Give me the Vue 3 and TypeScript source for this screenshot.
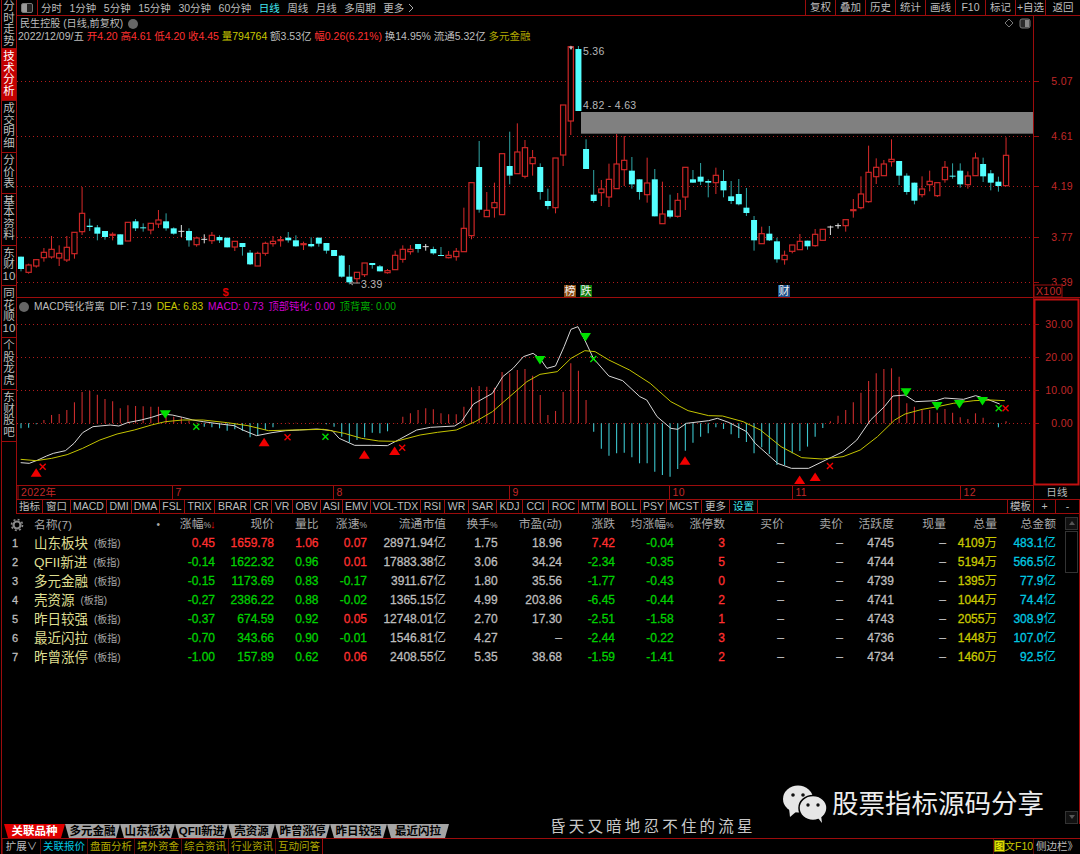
<template>
  <div class="app">
    <div class="upper">
      <nav class="side">
        <div v-for="s in sideItems" :key="s" class="side-item" :class="{ active: s === '技术分析' }">{{ s }}</div>
      </nav>

      <main class="main">
        <header class="toolbar">
          <div class="panel-btn"><span class="panel-ico"></span></div>
          <div class="periods">
            <span v-for="p in periods" :key="p" :class="{ on: p === '日线' }">{{ p }}</span>
            <svg class="more-arrow" width="6" height="10" viewBox="0 0 6 10"><path d="M1 1l4 4-4 4" fill="none" stroke="#aaa" /></svg>
          </div>
          <div class="tools">
            <span v-for="t in tools" :key="t" class="tool">{{ t }}</span>
          </div>
        </header>

        <section class="chart">
          <svg class="plot" width="1063" height="282" viewBox="17 16 1063 282">
            <line v-for="g in priceGrid" :key="g.y" class="grid" x1="17" x2="1033" :y1="g.y" :y2="g.y" />
            <g v-for="c in candles" :key="c.x">
              <line :class="'wick-' + c.kind" :x1="c.x" :x2="c.x" :y1="c.hi" :y2="c.lo" />
              <rect v-if="c.kind === 'r'" class="body-r" :x="c.x - 2.6" :y="c.top" width="5.2" :height="c.h" />
              <rect v-else-if="c.kind === 'c'" class="body-c" :x="c.x - 3" :y="c.top" width="6" :height="c.h" />
              <line v-else class="wick-w" :x1="c.x - 3" :x2="c.x + 3" :y1="c.top" :y2="c.top" />
            </g>
            <rect x="581" y="112" width="452" height="21" fill="#808080" />
            <line x1="581" x2="1033" y1="133.5" y2="133.5" stroke="#555" />
            <path d="M569 47l2-1 2 1-2 3z" fill="#bbb" />
            <text class="lbl" x="583" y="55">5.36</text>
            <text class="lbl" x="583" y="109">4.82 - 4.63</text>
            <text class="lbl" x="361" y="288">3.39</text>
            <path d="M360 283h-10m3-2l-3 2 3 2" fill="none" stroke="#999" />
            <text class="dollar" x="225.500" y="296" text-anchor="middle">$</text>
            <g v-for="b in badges" :key="b.t">
              <rect :x="b.x" y="285" width="12" height="12" :fill="b.c" />
              <text class="badge" :x="b.x + 6" y="295" text-anchor="middle">{{ b.t }}</text>
            </g>
            <line class="solid" x1="1033.500" x2="1033.500" y1="16" y2="298" />
            <line class="solid" x1="17" x2="1080" y1="297.500" y2="297.500" />
            <g v-for="g in priceGrid" :key="'t' + g.y">
              <line class="solid" x1="1034" x2="1039" :y1="g.y" :y2="g.y" />
              <text class="axis" x="1073" :y="g.y + 3.5" text-anchor="end">{{ g.t }}</text>
            </g>
            <rect class="box" x="1034" y="285" width="28" height="12" />
            <text class="axis" x="1036" y="295">X100</text>
            <path d="M1009 19l4 4-4 4-4-4z" fill="none" stroke="#777" />
            <rect x="1020" y="19" width="10" height="9" rx="2" fill="#2a2a2a" stroke="#777" />
            <rect x="1025" y="20" width="4" height="7" fill="#888" />
          </svg>
          <div class="chart-head">
            <div class="stock">民生控股 (日线,前复权) <i class="drop"></i></div>
            <div class="quote">
              <span>2022/12/09/五</span>
              <span class="red">开4.20</span>
              <span class="red">高4.61</span>
              <span class="red">低4.20</span>
              <span class="red">收4.45</span>
              <span class="yellow">量794764</span>
              <span>额3.53亿</span>
              <span class="red">幅0.26(6.21%)</span>
              <span>换14.95%</span>
              <span>流通5.32亿</span>
              <span class="olive">多元金融</span>
            </div>
          </div>
        </section>

        <section class="chart">
          <svg class="plot" width="1063" height="201" viewBox="17 298 1063 201">
            <line v-for="g in macdGrid" :key="g.y" class="grid" x1="17" x2="1033" :y1="g.y" :y2="g.y" />
            <line v-for="b in bars" :key="b.x" :class="b.up ? 'bar-r' : 'bar-c'" :x1="b.x" :x2="b.x" y1="423.300" :y2="b.y" />
            <polyline class="dif" :points="difLine" />
            <polyline class="dea" :points="deaLine" />
            <path v-for="m in upMarks" :key="m[0]" :d="`M${m[0]} ${m[1] - 4.500}l5.500 8.500h-11z`" fill="#f00000" />
            <path v-for="m in downMarks" :key="m[0]" :d="`M${m[0]} ${m[1] + 4.500}l5.500 -8.500h-11z`" fill="#00e000" />
            <path v-for="m in redCross" :key="m[0]" class="x-r" :d="`M${m[0] - 3} ${m[1] - 3}l6 6m0 -6l-6 6`" />
            <path v-for="m in greenCross" :key="m[0]" class="x-g" :d="`M${m[0] - 3} ${m[1] - 3}l6 6m0 -6l-6 6`" />

            <rect class="frame" x="1034.500" y="299.500" width="44" height="185" />
            <g v-for="g in macdGrid" :key="'t' + g.y">
              <line class="solid" x1="1034" x2="1039" :y1="g.y" :y2="g.y" />
              <text class="axis" x="1073" :y="g.y + 3.5" text-anchor="end">{{ g.t }}</text>
            </g>
            <line class="solid" x1="17" x2="1034" y1="485.500" y2="485.500" />
            <line class="solid" x1="1033.500" x2="1033.500" y1="298" y2="499" />
            <g v-for="d in months" :key="d.t">
              <line class="solid" :x1="d.x" :x2="d.x" y1="485" y2="499" />
              <text class="axis" :x="d.x + 3" y="496">{{ d.t }}</text>
            </g>
            <text class="lbl" x="1057" y="496" text-anchor="middle">日线</text>
          </svg>
          <div class="macd-head">
            <i class="drop"></i>
            <span>MACD钝化背离</span>
            <span>DIF: 7.19</span>
            <span class="yellow">DEA: 6.83</span>
            <span class="magenta">MACD: 0.73</span>
            <span class="magenta">顶部钝化: 0.00</span>
            <span class="green">顶背离: 0.00</span>
          </div>
        </section>

        <div class="indicators">
          <span
            v-for="t in indicators"
            :key="t.n"
            class="ind"
            :class="{ cyan: t.n === '设置' }"
            :style="{ width: t.w + 'px' }"
          >{{ t.n }}</span>
          <span class="ind-fill"></span>
          <span v-for="t in indicatorsRight" :key="t.n" class="ind" :style="{ width: t.w + 'px' }">{{ t.n }}</span>
        </div>
      </main>
    </div>

    <section class="table-area">
      <div class="list">
        <div class="row head">
          <span class="idx">
            <svg width="14" height="14" viewBox="0 0 14 14">
              <circle cx="7" cy="7" r="3.500" fill="none" stroke="#8a8a8a" stroke-width="2.200" />
              <circle cx="7" cy="7" r="5.500" fill="none" stroke="#8a8a8a" stroke-width="1.600" stroke-dasharray="2 2.320" />
            </svg>
          </span>
          <span class="name">名称(7)<b class="dot">•</b></span>
          <span>涨幅<i class="pct">%</i><b class="sort">↓</b></span>
          <span v-for="h in headers" :key="h">{{ h.replace('%', '') }}<i v-if="h.endsWith('%')" class="pct">%</i></span>
        </div>
        <div v-for="(r, i) in rows" :key="r.name" class="row">
          <span class="idx">{{ i + 1 }}</span>
          <span class="name"><em>{{ r.name }}</em><small>(板指)</small></span>
          <span :class="tone(r.zf)">{{ r.zf }}</span>
          <span :class="tone(r.zf)">{{ r.price }}</span>
          <span :class="Number(r.vol) >= 1 ? 'red' : 'green'">{{ r.vol }}</span>
          <span :class="tone(r.speed)">{{ r.speed }}</span>
          <span>{{ r.cap }}<u>亿</u></span>
          <span>{{ r.turn }}</span>
          <span>{{ r.pe }}</span>
          <span :class="tone(r.chg)">{{ r.chg }}</span>
          <span :class="tone(r.avg)">{{ r.avg }}</span>
          <span class="red">{{ r.limit }}</span>
          <span>–</span>
          <span>–</span>
          <span>{{ r.active }}</span>
          <span>–</span>
          <span class="yellow">{{ r.total }}<u>万</u></span>
          <span class="sky">{{ r.amount }}<u>亿</u></span>
        </div>
      </div>
      <div class="scroll">
        <div class="scroll-top">
          <i class="btn up"></i>
          <i class="thumb"></i>
        </div>
        <i class="btn down"></i>
      </div>

      <div class="lyric">昏天又暗地忍不住的流星</div>
      <div class="brand">
        <svg width="44" height="38" viewBox="0 0 44 38">
          <ellipse cx="15" cy="14" rx="15" ry="13.500" fill="#e6e6e6" />
          <path d="M6 23l1 9 7-6z" fill="#e6e6e6" />
          <circle cx="10" cy="10" r="1.800" fill="#111" />
          <circle cx="20" cy="10" r="1.800" fill="#111" />
          <ellipse cx="30" cy="23" rx="14" ry="12.500" fill="#e6e6e6" stroke="#000" stroke-width="1.500" />
          <path d="M35 33l4 5-1-8z" fill="#e6e6e6" />
          <circle cx="25" cy="20" r="1.700" fill="#111" />
          <circle cx="35" cy="20" r="1.700" fill="#111" />
        </svg>
        <span>股票指标源码分享</span>
      </div>
    </section>

    <div class="sheet-tabs">
      <span v-for="(t, i) in sheetTabs" :key="t.n" class="sheet" :class="{ first: i === 0 }" :style="{ width: t.w + 'px' }">{{ t.n }}</span>
    </div>

    <footer class="status">
      <span class="cell">扩展∨</span>
      <span class="cell sky">关联报价</span>
      <span v-for="s in statusItems" :key="s" class="cell olive">{{ s }}</span>
      <span class="status-fill"></span>
      <span class="cell yellow right-a"><b>图</b>文F10</span>
      <span class="cell right-b">侧边栏》</span>
    </footer>
  </div>
</template>

<script setup lang="ts">
type Candle = [string, number, number, number, number]

const sideItems = ['分时走势', '技术分析', '成交明细', '分价表', '基本资料', '东财10', '同花顺10', '个股龙虎', '东财股吧']
const periods = ['分时', '1分钟', '5分钟', '15分钟', '30分钟', '60分钟', '日线', '周线', '月线', '多周期', '更多']
const tools = ['复权', '叠加', '历史', '统计', '画线', 'F10', '标记', '+自选', '返回']

const priceGrid = [
  { y: 81.5, t: '5.07' },
  { y: 136.5, t: '4.61' },
  { y: 186.5, t: '4.19' },
  { y: 237.5, t: '3.77' },
  { y: 282.5, t: '3.39' },
]
const macdGrid = [
  { y: 324.5, t: '30.00' },
  { y: 357.5, t: '20.00' },
  { y: 390.5, t: '10.00' },
  { y: 423.5, t: '0.00' },
]
const badges = [
  { t: '榜', x: 564, c: '#8a4a10' },
  { t: '跌', x: 580, c: '#0a7a0a' },
  { t: '财', x: 778, c: '#1a4f88' },
]

// kind, body top, body bottom, high, low (3x crop units, y = 130 + v / 3)
const raw: Candle[] = [
  ['c',380,417,380,424],['r',405,427,401,431],['r',389,408,387,413],['r',367,383,354,395],['r',358,381,318,386],
  ['r',370,384,346,408],['r',352,390,318,396],['r',307,371,307,386],['r',250,305,171,315],['c',287,291,266,303],
  ['c',292,311,285,331],['c',303,321,303,329],['r',313,316,307,331],['c',313,344,313,344],['r',277,333,277,333],
  ['c',274,295,267,303],['c',292,295,280,305],['r',280,300,280,313],['r',270,282,240,294],['c',274,295,250,302],
  ['c',295,311,292,314],['w',304,304,285,321],['c',303,331,295,350],['r',324,344,320,350],['w',328,328,313,340],
  ['r',316,332,306,342],['c',321,331,316,339],['c',323,352,323,352],['r',334,351,334,363],['c',339,351,339,377],
  ['c',368,403,360,405],['r',370,408,365,408],['r',340,370,335,377],['r',334,341,318,350],['r',329,330,318,350],
  ['c',323,331,306,338],['c',331,349,316,350],['r',341,342,335,360],['c',342,349,322,352],['c',323,341,323,350],
  ['c',339,362,339,371],['c',360,378,360,378],['c',377,440,375,443],['c',440,457,405,463],['r',427,446,427,460],
  ['r',399,434,399,441],['c',399,405,399,416],['c',409,424,405,424],['r',422,428,417,431],['r',376,419,362,419],
  ['r',358,388,346,398],['r',358,365,345,374],['c',342,357,342,368],['w',350,350,342,362],['c',357,370,350,374],
  ['c',375,377,351,377],['r',376,383,363,385],['r',364,380,354,392],['r',295,365,233,365],['r',158,317,158,328],
  ['c',111,239,33,248],['r',241,260,186,260],['r',218,233,158,263],['r',71,254,71,254],['c',108,137,5,163],
  ['r',66,131,-20,131],['r',53,139,30,145],['r',83,101,60,137],['c',111,186,100,209],['c',213,228,176,238],
  ['r',84,233,84,250],['r',-75,75,-75,108],['r',-250,-27,-253,15],['c',-243,-57,-252,-57],['c',57,117,28,117],
  ['c',194,213,120,218],['r',177,188,150,228],['r',148,201,101,231],['r',102,176,12,176],['r',91,119,18,168],
  ['c',122,163,81,176],['c',148,186,148,209],['r',159,194,83,218],['c',148,259,117,259],['r',252,281,155,281],
  ['c',241,260,194,265],['r',211,259,189,263],['r',112,201,112,240],['c',148,158,120,158],['c',140,155,99,165],
  ['c',153,158,148,202],['r',136,158,113,192],['c',153,181,120,202],['c',199,213,153,222],['c',192,223,147,226],
  ['c',233,249,174,258],['c',270,331,258,362],['r',311,341,290,341],['c',311,331,288,333],['c',334,388,323,398],
  ['r',376,389,362,404],['r',345,364,345,370],['r',334,359,312,359],['c',332,349,332,359],['r',313,347,297,350],
  ['r',298,331,298,331],['w',291,291,287,315],['w',287,287,280,296],['r',269,287,269,305],['r',239,242,207,263],
  ['r',192,233,139,238],['r',127,215,47,218],['r',112,140,85,162],['r',102,137,90,137],['r',88,95,28,110],
  ['c',93,137,93,165],['c',137,186,130,194],['c',158,212,158,223],['r',177,194,139,202],['r',154,164,122,184],
  ['r',158,197,158,201],['r',112,149,93,158],['c',137,140,100,146],['c',122,163,100,173],['r',138,164,124,176],
  ['r',84,137,68,137],['c',102,139,83,156],['c',130,158,120,181],['c',155,168,140,185],['r',76,167,22,167],
]

const stepX = (i: number) => 21 + 7.636 * i
const py = (v: number) => 130 + v / 3

const candles = raw.map(([kind, top, bot, hi, lo], i) => ({
  kind,
  x: stepX(i),
  top: py(top),
  h: Math.max(py(bot) - py(top), 1),
  hi: py(hi),
  lo: py(lo),
}))

const hist = [
  -15,-13,-3,10,25,28,40,63,94,97,86,73,66,45,54,52,51,50,50,20,20,18,8,2,-10,-12,-15,-22,-18,-22,-42,-38,-20,-12,
  1,2,2,0,2,2,-3,-10,-40,-57,-50,-42,-28,-30,-24,1,20,30,40,45,42,30,27,27,50,108,112,110,107,154,150,160,163,143,
  85,25,37,94,180,158,70,-25,-76,-97,-90,-88,-102,-120,-120,-145,-155,-160,-137,-82,-58,-40,-30,-12,-17,-33,-44,-56,
  -90,-72,-92,-125,-125,-90,-83,-70,-40,-14,6,23,40,63,92,127,150,163,165,140,60,50,42,40,32,43,32,18,13,30,17,2,-12,6,
]
const bars = hist.map((h, i) => ({ x: stepX(i), y: 423.3 - h / 3, up: h >= 0 }))

const zl = (x: number, y: number): [number, number] => [x / 2.904, 280 + y / 3]
const zr = (x: number, y: number): [number, number] => [540 + x / 2.904, 280 + y / 3]
const toPoints = (left: number[][], right: number[][]) =>
  [...left.map(p => zl(p[0], p[1])), ...right.map(p => zr(p[0], p[1]))]
    .map(p => p.join(','))
    .join(' ')

const difLine = toPoints(
  [[60,548],[85,550],[110,540],[135,528],[155,520],[190,512],[215,490],[240,458],[270,440],[320,435],[345,438],[370,428],[410,420],[440,412],[470,402],[500,405],[530,412],[560,420],[590,425],[640,432],[680,437],[705,450],[745,467],[790,458],[830,452],[870,450],[920,447],[965,452],[985,475],[1030,496],[1080,496],[1125,497],[1160,478],[1210,450],[1250,442],[1320,438],[1340,425],[1375,372],[1430,340],[1460,290],[1490,265],[1520,230],[1548,220]],
  [[0,235],[20,265],[45,258],[70,200],[90,148],[110,140],[130,180],[155,235],[200,288],[240,302],[290,350],[310,360],[340,410],[380,445],[400,448],[425,430],[490,422],[515,415],[550,428],[600,455],[625,490],[690,550],[730,565],[780,565],[830,540],[880,515],[920,480],[960,420],[1000,380],[1025,348],[1060,345],[1090,365],[1150,362],[1175,354],[1230,358],[1265,347],[1300,358],[1335,372]],
)
const deaLine = toPoints(
  [[60,538],[105,542],[150,535],[195,524],[240,505],[290,480],[340,462],[390,450],[440,435],[480,425],[530,420],[590,420],[660,428],[720,437],[780,452],[850,450],[940,448],[1000,460],[1050,475],[1100,483],[1150,484],[1220,465],[1270,457],[1325,450],[1380,425],[1430,395],[1480,350],[1530,305]],
  [[0,283],[50,275],[90,235],[130,212],[160,215],[200,240],[260,270],[320,310],[380,365],[430,392],[490,407],[530,408],[590,425],[640,450],[700,500],[760,533],[820,537],[880,530],[930,510],[980,470],[1030,420],[1060,402],[1110,388],[1150,381],[1200,370],[1260,362],[1310,360],[1350,362]],
)

const upMarks = [zl(105, 578), zl(767, 487), zl(1058, 524), zl(1146, 513), zr(421, 542), zr(754, 600), zr(799, 591)]
const downMarks = [zl(480, 403), zr(0, 240), zr(132, 171), zr(1063, 337), zr(1153, 378), zr(1218, 372), zr(1285, 363)]
const redCross = [zl(124, 560), zl(835, 472), zl(1168, 503), zr(842, 558), zr(1352, 385)]
const greenCross = [zl(570, 440), zl(945, 470), zr(155, 237), zr(1332, 385)]

const months = [
  { t: '2022年', x: 18 },
  { t: '7', x: 172.5 },
  { t: '8', x: 333.5 },
  { t: '9', x: 509.5 },
  { t: '10', x: 669.5 },
  { t: '11', x: 792.5 },
  { t: '12', x: 960.5 },
]

const indicators = [
  { n: '指标', w: 26 }, { n: '窗口', w: 28 }, { n: 'MACD', w: 36 }, { n: 'DMI', w: 25 }, { n: 'DMA', w: 28 },
  { n: 'FSL', w: 25 }, { n: 'TRIX', w: 30 }, { n: 'BRAR', w: 36 }, { n: 'CR', w: 21 }, { n: 'VR', w: 21 },
  { n: 'OBV', w: 28 }, { n: 'ASI', w: 22 }, { n: 'EMV', w: 28 }, { n: 'VOL-TDX', w: 50 }, { n: 'RSI', w: 24 },
  { n: 'WR', w: 24 }, { n: 'SAR', w: 28 }, { n: 'KDJ', w: 26 }, { n: 'CCI', w: 26 }, { n: 'ROC', w: 30 },
  { n: 'MTM', w: 29 }, { n: 'BOLL', w: 33 }, { n: 'PSY', w: 26 }, { n: 'MCST', w: 35 }, { n: '更多', w: 28 },
  { n: '设置', w: 28 },
]
const indicatorsRight = [{ n: '模板', w: 26 }, { n: '+', w: 22 }, { n: '-', w: 24 }]

const headers = ['现价', '量比', '涨速%', '流通市值', '换手%', '市盈(动)', '涨跌', '均涨幅%', '涨停数', '买价', '卖价', '活跃度', '现量', '总量', '总金额']

const rows = [
  { name: '山东板块', zf: '0.45', price: '1659.78', vol: '1.06', speed: '0.07', cap: '28971.94', turn: '1.75', pe: '18.96', chg: '7.42', avg: '-0.04', limit: 3, active: 4745, total: 4109, amount: '483.1' },
  { name: 'QFII新进', zf: '-0.14', price: '1622.32', vol: '0.96', speed: '0.01', cap: '17883.38', turn: '3.06', pe: '34.24', chg: '-2.34', avg: '-0.35', limit: 5, active: 4744, total: 5194, amount: '566.5' },
  { name: '多元金融', zf: '-0.15', price: '1173.69', vol: '0.83', speed: '-0.17', cap: '3911.67', turn: '1.80', pe: '35.56', chg: '-1.77', avg: '-0.43', limit: 0, active: 4739, total: 1395, amount: '77.9' },
  { name: '壳资源', zf: '-0.27', price: '2386.22', vol: '0.88', speed: '-0.02', cap: '1365.15', turn: '4.99', pe: '203.86', chg: '-6.45', avg: '-0.44', limit: 2, active: 4741, total: 1044, amount: '74.4' },
  { name: '昨日较强', zf: '-0.37', price: '674.59', vol: '0.92', speed: '0.05', cap: '12748.01', turn: '2.70', pe: '17.30', chg: '-2.51', avg: '-1.58', limit: 1, active: 4743, total: 2055, amount: '308.9' },
  { name: '最近闪拉', zf: '-0.70', price: '343.66', vol: '0.90', speed: '-0.01', cap: '1546.81', turn: '4.27', pe: '–', chg: '-2.44', avg: '-0.22', limit: 3, active: 4736, total: 1448, amount: '107.0' },
  { name: '昨曾涨停', zf: '-1.00', price: '157.89', vol: '0.62', speed: '0.06', cap: '2408.55', turn: '5.35', pe: '38.68', chg: '-1.59', avg: '-1.41', limit: 2, active: 4734, total: 1460, amount: '92.5' },
]

const tone = (v: string) => (Number(v) >= 0 ? 'red' : 'green')

const sheetTabs = [
  { n: '关联品种', w: 61 }, { n: '多元金融', w: 55 }, { n: '山东板块', w: 55 }, { n: 'QFII新进', w: 53 },
  { n: '壳资源', w: 47 }, { n: '昨曾涨停', w: 55 }, { n: '昨日较强', w: 57 }, { n: '最近闪拉', w: 62 },
]
const statusItems = ['盘面分析', '境外资金', '综合资讯', '行业资讯', '互动问答']
</script>

<style>
html, body { background: #000; }
</style>

<style scoped>
.app {
  width: 1080px;
  height: 854px;
  box-sizing: border-box;
  background: #000;
  color: #bdbdbd;
  font-family: "Liberation Sans", "Noto Sans CJK SC", sans-serif;
  font-size: 10.5px;
  display: flex;
  flex-direction: column;
  overflow: hidden;
  padding-left: 1px;
}
.red { color: #ff3030; }
.green { color: #00d000; }
.yellow { color: #c8c800; }
.olive { color: #b0a800; }
.sky { color: #00c8e0; }
.cyan { color: #40e8f0; }
.magenta { color: #d000d0; }

.upper { display: flex; height: 514px; border-left: 1px solid #9c0c0c; }

.side { width: 14px; border-right: 1px solid #9c0c0c; flex: none; }
.side-item {
  width: 14px;
  line-height: 11.5px;
  padding: 2px 0 3px;
  font-size: 11.5px;
  text-align: center;
  word-break: break-all;
  border-bottom: 1px solid #9c0c0c;
}
.side-item:first-child { padding: 1px 0 1px; }
.side-item.active { background: #c40000; color: #fff; }

.main { width: 1063px; display: flex; flex-direction: column; flex: none; }

.toolbar {
  height: 15px;
  border-bottom: 1px solid #9c0c0c;
  display: flex;
  align-items: center;
  flex: none;
}
.panel-btn {
  width: 20px;
  height: 15px;
  border-right: 1px solid #9c0c0c;
  display: flex;
  align-items: center;
  justify-content: center;
  flex: none;
}
.panel-ico {
  width: 10px;
  height: 8px;
  border: 1px solid #777;
  border-radius: 2px;
  background: linear-gradient(90deg, #999 50%, #222 50%);
}
.periods { display: flex; gap: 7.5px; padding-left: 3px; align-items: center; flex: 1; }
.periods .on { color: #40e8f0; }
.more-arrow { margin-left: -4px; }
.tools { display: flex; }
.tool {
  width: 29px;
  height: 15px;
  line-height: 15px;
  text-align: center;
  border-left: 1px solid #9c0c0c;
}
.tool:last-child { width: 34px; }

.chart { position: relative; flex: none; }
.plot { display: block; }
.grid { stroke: #b01c1c; stroke-dasharray: 1 3; }
.solid { stroke: #9c0c0c; }
.wick-r { stroke: #d82a2a; }
.wick-c { stroke: #2fa5a5; }
.wick-w { stroke: #e0e0e0; }
.body-r { fill: #000; stroke: #cc2626; stroke-width: 1.2; }
.body-c { fill: #54ffff; }
.lbl { fill: #b8b8b8; font-size: 10.5px; letter-spacing: 0.3px; }
.axis { fill: #c02828; font-size: 10.5px; letter-spacing: 0.3px; }
.dollar { fill: #e00000; font-size: 11px; font-weight: bold; }
.badge { fill: #eee; font-size: 11px; }
.box { fill: #000; stroke: #9c0c0c; }
.frame { fill: none; stroke: #c01010; stroke-width: 2; }
.bar-r { stroke: #c82c2c; stroke-width: 1.1; }
.bar-c { stroke: #3cc4cc; stroke-width: 1.1; }
.dif { fill: none; stroke: #d8d8d8; stroke-width: 1; }
.dea { fill: none; stroke: #c4c400; stroke-width: 1; }
.x-r { stroke: #f00000; stroke-width: 1.4; fill: none; }
.x-g { stroke: #00e000; stroke-width: 1.4; fill: none; }

.chart-head { position: absolute; left: 3px; top: 1px; }
.stock { line-height: 13px; display: flex; align-items: center; gap: 5px; font-size: 10.1px; }
.drop {
  width: 10px;
  height: 10px;
  border-radius: 50%;
  background: #666;
  display: inline-block;
  flex: none;
}
.quote { display: flex; gap: 2.8px; line-height: 12px; margin-left: -2px; white-space: nowrap; }

.macd-head {
  position: absolute;
  left: 2px;
  top: 2px;
  display: flex;
  gap: 5px;
  align-items: center;
  line-height: 13px;
  font-size: 10.2px;
  white-space: nowrap;
}
.macd-head .green { color: #00b000; }

.indicators {
  height: 15px;
  box-sizing: border-box;
  border-top: 1px solid #9c0c0c;
  border-bottom: 1px solid #9c0c0c;
  display: flex;
  flex: none;
}
.ind {
  box-sizing: border-box;
  border-right: 1px solid #9c0c0c;
  text-align: center;
  line-height: 13px;
  white-space: nowrap;
  overflow: hidden;
  flex: none;
}
.ind.cyan { color: #40e8f0; }
.ind-fill { flex: 1; border-right: 1px solid #9c0c0c; }

.table-area {
  position: relative;
  height: 310px;
  flex: none;
  display: flex;
  justify-content: space-between;
  border-left: 1px solid #9c0c0c;
  border-right: 1px solid #9c0c0c;
}
.list { width: 1054px; flex: none; }
.row {
  display: grid;
  grid-template-columns: 32px 131px 50px 59px 44.5px 48.5px 79px 51.6px 64.4px 53px 58.6px 51.4px 59px 59px 51px 52px 51px 59px;
  height: 19px;
  line-height: 19px;
  font-size: 12px;
  -webkit-text-stroke: 0.3px;
  color: #bdbdbd;
  text-align: right;
  white-space: nowrap;
}
.row.head {
  height: 20px;
  line-height: 20px;
  font-size: 11.8px;
  -webkit-text-stroke: 0;
  color: #a8a8a8;
}
.row.head .idx { padding-left: 8px; display: flex; align-items: center; }
.idx { text-align: left; padding-left: 10px; font-size: 11px; }
.name { text-align: left; display: flex; align-items: center; gap: 6px; -webkit-text-stroke: 0; }
.head .name { justify-content: space-between; padding-right: 5px; }
.dot { font-weight: 400; font-size: 10px; }
.pct { font-style: normal; font-size: 8.5px; }
.name em {
  font-style: normal;
  font-size: 13.5px;
  color: #dede90;
}
.name small { font-size: 10px; color: #a8a8a8; }
.sort { color: #f00000; font-weight: 400; display: inline-block; width: 5px; margin-left: -1px; font-size: 11px; }
u { text-decoration: none; font-size: 12.5px; -webkit-text-stroke: 0; }

.scroll {
  width: 13px;
  margin-right: 1px;
  padding-top: 3px;
  display: flex;
  flex-direction: column;
  justify-content: space-between;
  flex: none;
}
.scroll-top { display: flex; flex-direction: column; gap: 1px; }
.btn { height: 11px; border: 1px solid #333; background: #111; display: block; position: relative; }
.btn::after {
  content: "";
  position: absolute;
  left: 3px;
  top: 3px;
  border-left: 3px solid transparent;
  border-right: 3px solid transparent;
}
.btn.up::after { border-bottom: 4px solid #555; }
.btn.down::after { border-top: 4px solid #555; }
.thumb { height: 40px; border: 1px solid #333; display: block; }

.lyric {
  position: absolute;
  left: 548px;
  top: 304px;
  font-size: 15.5px;
  letter-spacing: 3.2px;
  color: #c8c8c8;
  line-height: 18px;
  white-space: nowrap;
}
.brand {
  position: absolute;
  left: 781px;
  top: 271px;
  display: flex;
  align-items: center;
  gap: 5px;
  color: #ececec;
  font-size: 26.5px;
  white-space: nowrap;
  line-height: 38px;
}

.sheet-tabs {
  height: 14px;
  flex: none;
  display: flex;
  padding-left: 2px;
  border-left: 1px solid #9c0c0c;
}
.sheet {
  flex: none;
  box-sizing: border-box;
  background: #a4a4a4;
  color: #000;
  font-size: 11.5px;
  font-weight: 700;
  text-align: center;
  line-height: 15px;
  white-space: nowrap;
  clip-path: polygon(0 0, 100% 0, calc(100% - 4px) 100%, 4px 100%);
}
.sheet.first { background: #e00000; color: #fff; }

.status {
  height: 16px;
  box-sizing: border-box;
  flex: none;
  display: flex;
  border-top: 1px solid #9c0c0c;
  border-left: 1px solid #9c0c0c;
  padding-left: 1px;
}
.cell {
  border-left: 1px solid #5c0808;
  border-right: 1px solid #9c0c0c;
  box-sizing: border-box;
  width: 48px;
  line-height: 15px;
  text-align: center;
  white-space: nowrap;
  margin-left: -1px;
}
.cell:first-child { width: 39px; }
.status-fill { flex: 1; }
.right-a { width: 41px; }
.right-a b { font-weight: 400; background: #707000; color: #ff0; }
.right-b { width: 47px; border-right: none; text-align: left; padding-left: 2px; }
</style>
